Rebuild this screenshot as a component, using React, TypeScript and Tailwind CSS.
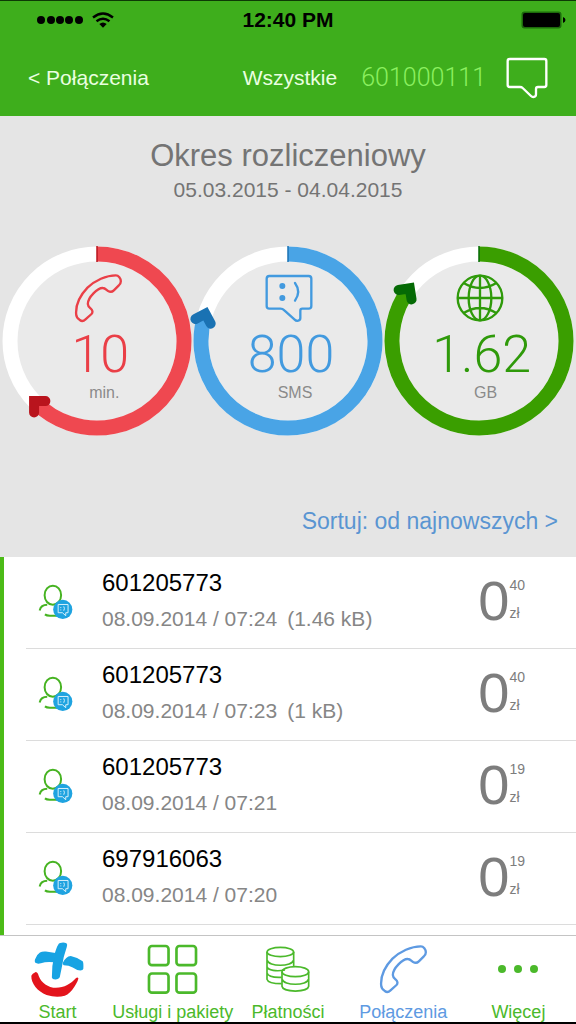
import type { ReactNode } from "react";
import { clsx } from "clsx";

interface Usage {
  value: string;
  unit: string;
  // degrees, clockwise from the top
  angle: number;
  color: string;
  dark: string;
  textClass: string;
  icon: ReactNode;
}

interface Connection {
  number: string;
  date: string;
  size?: string;
  whole: string;
  cents: string;
}

const CONNECTIONS: Connection[] = [
  { number: "601205773", date: "08.09.2014 / 07:24", size: "(1.46 kB)", whole: "0", cents: "40" },
  { number: "601205773", date: "08.09.2014 / 07:23", size: "(1 kB)", whole: "0", cents: "40" },
  { number: "601205773", date: "08.09.2014 / 07:21", whole: "0", cents: "19" },
  { number: "697916063", date: "08.09.2014 / 07:20", whole: "0", cents: "19" },
];

function PhoneIcon() {
  return (
    <svg viewBox="222 116 146 150" className="w-[49px] h-[50px]" fill="none" stroke="currentColor" strokeWidth="7" strokeLinejoin="round" aria-hidden="true">
      <path d="M228 240C226 213 239 184 262 160C285 138 318 123 347 123C355 123 362 132 362 141C362 147 360 150 356 153L341 168C336 173 329 173 324 170C318 166 315 161 308 161C293 160 263 189 263 209C263 216 267 219 272 223C278 228 278 235 274 239L256 255C251 260 244 261 239 257C232 253 228 248 228 240Z" />
    </svg>
  );
}

function SmsIcon() {
  return (
    <svg viewBox="222 116 150 150" className="w-[50px] h-[50px]" fill="none" stroke="currentColor" strokeWidth="7" strokeLinejoin="round" strokeLinecap="round" aria-hidden="true">
      <path d="M238 125H356Q364 125 364 133V215Q364 223 356 223H337Q331 223 331 229V251C331 260 320 262 314 256L283 228Q278 223 271 223H238Q230 223 230 215V133Q230 125 238 125Z" />
      <circle cx="277" cy="155" r="9" fill="currentColor" stroke="none" />
      <circle cx="277" cy="191" r="9" fill="currentColor" stroke="none" />
      <path d="M315 146Q334 172 315 199" />
    </svg>
  );
}

function GlobeIcon() {
  return (
    <svg viewBox="224 117 150 150" className="w-[50px] h-[50px]" fill="none" stroke="currentColor" strokeWidth="7" aria-hidden="true">
      <circle cx="299" cy="192" r="67" />
      <ellipse cx="299" cy="192" rx="34" ry="67" />
      <path d="M299 125V259M232 192H366M250 147Q299 177 348 147M250 237Q299 207 348 237" />
    </svg>
  );
}

function BubbleIcon() {
  return (
    <svg viewBox="650 167 126 124" className="w-[42px] h-[42px]" fill="none" stroke="currentColor" strokeWidth="7" strokeLinejoin="round" aria-hidden="true">
      <path d="M661 172H765Q771 172 771 178V250Q771 256 765 256H746Q740 256 740 262V278C740 287 730 288 725 283L700 259Q697 256 692 256H661Q655 256 655 250V178Q655 172 661 172Z" />
    </svg>
  );
}

function ContactIcon() {
  return (
    <svg viewBox="110 102 106 110" className="w-[35px] h-[37px]" fill="none" aria-hidden="true">
      <g stroke="#46b321" strokeWidth="6">
        <ellipse cx="155" cy="138" rx="25" ry="29" />
        <path d="M115 184Q119 167 138 167M131 196Q136 200 146 200H168" />
      </g>
      <circle cx="185" cy="181" r="29" fill="#1fa3e0" />
      <path d="M171 166H201V191H194V200L184 191H171Z" stroke="#d9f1fb" strokeWidth="3" strokeLinejoin="round" />
      <path d="M179 174V177M179 181V184M188 172Q192 178 188 185" stroke="#d9f1fb" strokeWidth="3" />
    </svg>
  );
}

function LogoIcon() {
  return (
    <svg viewBox="88 62 166 170" className="w-[55px] h-[57px]" aria-hidden="true">
      <g fill="#17a3e3">
        <path d="M179 67Q190 64 198 68Q202 71 199 79Q188 110 184 140L178 170Q175 177 164 177Q155 177 154 171Q153 137 162 101Q168 80 173 72Q175 68 179 67Z" />
        <path d="M103 117Q107 103 118 96Q125 92 136 93L165 97L160 125Q138 122 121 128Q111 131 104 127Q101 123 103 117Z" />
        <path d="M187 127Q196 107 211 106Q231 110 247 122Q250 126 249 145Q248 150 240 150Q228 149 217 141Q205 134 190 134Q186 132 187 127Z" />
      </g>
      <path fill="#e3141c" d="M92 166Q95 158 104 155Q109 154 112 160C118 182 134 197 158 202C187 205 210 192 227 173Q231 169 234 173Q234 181 222 199Q209 220 193 226Q168 233 138 224C111 213 91 190 92 166Z" />
    </svg>
  );
}

function PackagesIcon() {
  return (
    <svg viewBox="442 69 154 154" className="w-[51px] h-[51px]" fill="none" stroke="currentColor" strokeWidth="8" aria-hidden="true">
      <rect x="448" y="75" width="59" height="58" rx="9" />
      <rect x="531" y="75" width="59" height="58" rx="9" />
      <rect x="448" y="158" width="59" height="58" rx="9" />
      <rect x="531" y="158" width="59" height="58" rx="9" />
    </svg>
  );
}

function CoinsIcon() {
  return (
    <svg viewBox="104 74 138 144" className="w-[46px] h-[48px]" fill="none" stroke="currentColor" strokeWidth="5" aria-hidden="true">
      <ellipse cx="150" cy="95" rx="40" ry="14" />
      <path d="M110 95V177C112 185 130 190 154 190M190 95V139M110 119C114 140 186 140 190 119M110 139C113 150 138 154 164 149M110 158C113 168 130 172 154 171" />
      <ellipse cx="195" cy="154" rx="40" ry="15" />
      <path d="M155 154V198C158 217 232 217 235 198V154M155 176C159 197 231 197 235 176" />
    </svg>
  );
}

function MoreIcon() {
  return (
    <svg viewBox="0 0 42 10" className="w-[42px] h-[10px]" fill="currentColor" aria-hidden="true">
      <circle cx="5" cy="5" r="4" />
      <circle cx="21" cy="5" r="4" />
      <circle cx="37" cy="5" r="4" />
    </svg>
  );
}

const USAGES: Usage[] = [
  { value: "10", unit: "min.", angle: 225, color: "#ef4850", dark: "#b9141d", textClass: "text-[#ea3f47]", icon: <PhoneIcon /> },
  { value: "800", unit: "SMS", angle: 287, color: "#49a4e6", dark: "#1a72b3", textClass: "text-[#429adf]", icon: <SmsIcon /> },
  { value: "1.62", unit: "GB", angle: 306, color: "#3a9e00", dark: "#056a05", textClass: "text-[#2f9a0a]", icon: <GlobeIcon /> },
];

const TABS = [
  { label: "Start", icon: <LogoIcon /> },
  { label: "Usługi i pakiety", icon: <PackagesIcon /> },
  { label: "Płatności", icon: <CoinsIcon /> },
  { label: "Połączenia", icon: <PhoneIcon />, active: true },
  { label: "Więcej", icon: <MoreIcon /> },
];

function StatusBar() {
  return (
    <div className="grid grid-cols-3 items-center h-[38px] text-black">
      <div className="flex items-center gap-2 pl-9">
        <svg viewBox="0 0 48 10" className="w-12 h-[10px]" aria-hidden="true">
          {[5, 15, 24, 33, 43].map((x) => (
            <circle key={x} cx={x} cy="5" r="4" />
          ))}
        </svg>
        <svg viewBox="0 0 22 16" className="w-[22px] h-4" fill="none" stroke="currentColor" strokeWidth="2.4" aria-hidden="true">
          <path d="M1 5.5Q11 -2.5 21 5.5M4.5 9.3Q11 4 17.5 9.3" />
          <path d="M7.3 12Q11 8.8 14.7 12L11 15.8Z" fill="currentColor" stroke="none" />
        </svg>
      </div>
      <div className="text-center text-[21px] font-bold leading-6">12:40 PM</div>
      <div className="flex justify-end pr-[10px]">
        <svg viewBox="0 0 45 18" className="w-[45px] h-[18px]" aria-hidden="true">
          <rect x="0.5" y="0.5" width="40" height="17" rx="3" fill="#1d6b0b" />
          <rect x="2" y="2" width="37" height="14" rx="2" />
          <path d="M42 6Q44.5 7 44.5 9Q44.5 11 42 12Z" />
        </svg>
      </div>
    </div>
  );
}

function UsageRing({ usage }: { usage: Usage }) {
  const rad = (usage.angle * Math.PI) / 180;
  const x = 96 + 87 * Math.sin(rad);
  const y = 96 - 87 * Math.cos(rad);

  return (
    <div className="relative w-48 h-48">
      <svg viewBox="0 0 192 192" className="absolute inset-0 w-full h-full overflow-visible" fill="none" aria-hidden="true">
        <circle cx="96" cy="96" r="87" fill="#eaeaea" stroke="#ffffff" strokeWidth="15" />
        <path d={`M96 9A87 87 0 1 1 ${x} ${y}`} stroke={usage.color} strokeWidth="15" />
        <path d="M96 1V17" stroke={usage.dark} strokeWidth="1.5" />
        <g transform={`translate(96 96) rotate(${usage.angle}) translate(0 -87)`}>
          <path d="M-6 -8L2 0L-6 8" stroke={usage.dark} strokeWidth="10" strokeLinecap="round" />
        </g>
      </svg>
      <div className={clsx("relative flex flex-col items-center pt-7 pl-[2px]", usage.textClass)}>
        {usage.icon}
        <div className="mt-[6px] pl-1 font-[Roboto,sans-serif] text-[52px] font-light leading-[52px]">{usage.value}</div>
        <div className="mt-[2px] pl-3 text-base leading-5 text-[#8a8a8a]">{usage.unit}</div>
      </div>
    </div>
  );
}

function ConnectionRow({ item }: { item: Connection }) {
  return (
    <li className="flex h-[92px] ml-[22px] pl-3 pr-[51px] border-b border-[#dcdcdc]">
      <div className="pt-[26px]">
        <ContactIcon />
      </div>
      <div className="flex-1 pl-[29px] pt-3">
        <div className="text-2xl leading-7 text-black">{item.number}</div>
        <div className="flex gap-[10px] mt-[10px] text-[21px] leading-6 text-[#868686]">
          <span>{item.date}</span>
          {item.size && <span>{item.size}</span>}
        </div>
      </div>
      <div className="flex pt-4 text-[#7d7d7d]">
        <span className="text-[56px] leading-[56px]">{item.whole}</span>
        <div className="flex flex-col gap-3 pt-1 text-sm leading-4">
          <span>{item.cents}</span>
          <span>zł</span>
        </div>
      </div>
    </li>
  );
}

export default function App() {
  return (
    <div className="flex flex-col min-h-screen bg-white font-['Liberation_Sans',Arial,sans-serif]">
      <header className="bg-[#3eae1c] border-t border-[#0d3a05]">
        <StatusBar />
        <nav className="flex items-center h-[77px] pl-7 pr-7 text-[21px] text-white">
          <a href="#back" className="text-[#eaffe0]">&lt; Połączenia</a>
          <div className="flex items-center gap-6 ml-auto">
            <button type="button" className="text-[#eaffe0]">Wszystkie</button>
            <div className="flex items-center gap-5">
              <span className="font-[Roboto,sans-serif] text-[25px] font-light text-[#8cf060]">601000111</span>
              <button type="button" aria-label="Wiadomości">
                <BubbleIcon />
              </button>
            </div>
          </div>
        </nav>
      </header>

      <section className="flex flex-col bg-[#e5e5e5] pt-5 text-[#747474]">
        <h1 className="text-center text-[31px] leading-10">Okres rozliczeniowy</h1>
        <p className="mt-[2px] text-center text-[21px] leading-6">05.03.2015 - 04.04.2015</p>
        <div className="grid grid-cols-3 justify-items-center mt-[43px] px-[2px]">
          {USAGES.map((usage) => (
            <UsageRing key={usage.unit} usage={usage} />
          ))}
        </div>
        <button type="button" className="self-end mt-[70px] mb-[22px] mr-[18px] text-[23px] leading-7 text-[#5a95d2]">
          Sortuj: od najnowszych &gt;
        </button>
      </section>

      <ul className="flex-1 border-l-4 border-[#4cbb17]">
        {CONNECTIONS.map((item) => (
          <ConnectionRow key={item.date} item={item} />
        ))}
      </ul>

      <nav className="grid grid-cols-5 h-[89px] border-t border-t-[#c4c4c4] border-b-2 border-b-black">
        {TABS.map((tab) => (
          <a
            key={tab.label}
            href="#tab"
            className={clsx(
              "flex flex-col items-center whitespace-nowrap text-lg leading-5",
              tab.active ? "text-[#5e9ae2]" : "text-[#4bb92b]"
            )}
          >
            <span className="flex items-center h-[66px]">{tab.icon}</span>
            {tab.label}
          </a>
        ))}
      </nav>
    </div>
  );
}
